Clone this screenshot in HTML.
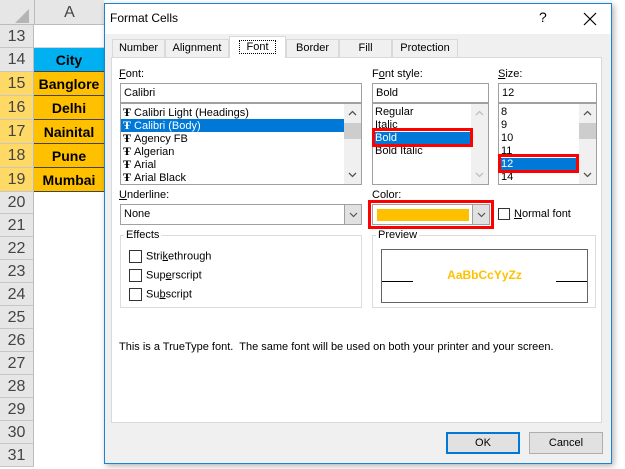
<!DOCTYPE html><html><head><style>
*{box-sizing:border-box;margin:0;padding:0}
body{width:625px;height:469px;overflow:hidden;background:#fff;font-family:"Liberation Sans",sans-serif;font-size:11px;color:#000;position:relative}
.a{position:absolute}
.rh{position:absolute;left:0;width:34px;background:#e6e6e6;border-bottom:1px solid #c6c6c6;border-right:1px solid #bcbcbc;color:#444;font-size:16px;text-align:center}
.cell{position:absolute;left:34px;width:70px;text-align:center;font-weight:bold;font-size:14px;border-bottom:1px solid #444}
.box{position:absolute;background:#fff;border:1px solid #a0a0a0}
.lst{overflow:hidden}
.lst div.i{height:13px;line-height:13px;padding-left:2px;white-space:nowrap}
.tt{font-family:"Liberation Serif",serif;font-weight:bold;font-size:12px;margin-right:3px}
.sb{position:absolute;right:0;top:0;bottom:0;width:17px;background:#f0f0f0}
.sb svg{position:absolute;left:4px}
.chk{display:inline-block;width:13px;height:13px;border:1px solid #333;vertical-align:middle;margin-right:4px;background:#fff}
.tab{position:absolute;top:39px;height:18px;border:1px solid #d9d9d9;border-bottom:none;background:#f0f0f0;text-align:center;line-height:17px}
.dd{position:absolute;right:0;top:0;width:17px;height:19px;background:#e1e1e1;border-left:1px solid #a0a0a0}
.dd svg{position:absolute;left:4px;top:7px}
.red{position:absolute;border:3px solid #f00}
</style></head><body>
<div class="a" style="left:0;top:0;width:104px;height:25px;background:#e6e6e6;border-bottom:1px solid #bcbcbc"></div>
<div class="a" style="left:34px;top:0;width:70px;height:25px;text-align:center;font-size:16px;line-height:25px;color:#444;border-left:1px solid #bcbcbc">A</div>
<svg class="a" style="left:14px;top:8px" width="16" height="16"><path d="M15 1V15H1Z" fill="#b5b5b5"/></svg>
<div class="rh" style="top:25px;height:23px;line-height:23px">13</div>
<div class="rh" style="top:48px;height:24px;line-height:24px">14</div>
<div class="rh" style="top:72px;height:24px;line-height:24px;background:#ffd966">15</div>
<div class="rh" style="top:96px;height:24px;line-height:24px;background:#ffd966">16</div>
<div class="rh" style="top:120px;height:24px;line-height:24px;background:#ffd966">17</div>
<div class="rh" style="top:144px;height:24px;line-height:24px;background:#ffd966">18</div>
<div class="rh" style="top:168px;height:24px;line-height:24px;background:#ffd966">19</div>
<div class="rh" style="top:192px;height:22px;line-height:22px">20</div>
<div class="rh" style="top:214px;height:23px;line-height:23px">21</div>
<div class="rh" style="top:237px;height:23px;line-height:23px">22</div>
<div class="rh" style="top:260px;height:23px;line-height:23px">23</div>
<div class="rh" style="top:283px;height:23px;line-height:23px">24</div>
<div class="rh" style="top:306px;height:23px;line-height:23px">25</div>
<div class="rh" style="top:329px;height:23px;line-height:23px">26</div>
<div class="rh" style="top:352px;height:23px;line-height:23px">27</div>
<div class="rh" style="top:375px;height:23px;line-height:23px">28</div>
<div class="rh" style="top:398px;height:23px;line-height:23px">29</div>
<div class="rh" style="top:421px;height:23px;line-height:23px">30</div>
<div class="rh" style="top:444px;height:23px;line-height:23px">31</div>
<div class="cell" style="top:48px;height:24px;line-height:24px;background:#00b0f0">City</div>
<div class="cell" style="top:72px;height:24px;line-height:24px;background:#ffc000">Banglore</div>
<div class="cell" style="top:96px;height:24px;line-height:24px;background:#ffc000">Delhi</div>
<div class="cell" style="top:120px;height:24px;line-height:24px;background:#ffc000">Nainital</div>
<div class="cell" style="top:144px;height:24px;line-height:24px;background:#ffc000">Pune</div>
<div class="cell" style="top:168px;height:24px;line-height:24px;background:#ffc000">Mumbai</div>
<div class="a" style="left:34px;top:25px;width:70px;height:23px;border-bottom:1px solid #d4d4d4"></div>

<div class="a" style="left:104px;top:3px;width:508px;height:461px;background:#f0f0f0;border:1px solid #1883d7;box-shadow:2px 2px 6px rgba(0,0,0,.3)">
<div class="a" style="left:0;top:0;width:506px;height:30px;background:#fff"></div>
<div class="a" style="left:5px;top:7px;font-size:12px">Format Cells</div>
<div class="a" style="left:434px;top:5px;font-size:14px">?</div>
<svg class="a" style="left:478px;top:8px" width="14" height="14"><path d="M1 1L13 13M13 1L1 13" stroke="#000" stroke-width="1.2"/></svg>
</div>
<div class="tab" style="left:112px;width:53px">Number</div>
<div class="tab" style="left:165px;width:64px">Alignment</div>
<div class="tab" style="left:286px;width:53px">Border</div>
<div class="tab" style="left:339px;width:53px">Fill</div>
<div class="tab" style="left:392px;width:66px">Protection</div>
<div class="a" style="left:111px;top:57px;width:491px;height:366px;background:#fff;border:1px solid #d9d9d9"></div>
<div class="a" style="left:229px;top:36px;width:57px;height:22px;background:#fff;border:1px solid #d9d9d9;border-bottom:none;text-align:center;line-height:20px"><span style="border:1px dotted #000;padding:0 6px">Font</span></div>

<div class="a" style="left:119px;top:68px"><u>F</u>ont:</div>
<div class="a" style="left:372px;top:68px">F<u>o</u>nt style:</div>
<div class="a" style="left:498px;top:68px"><u>S</u>ize:</div>
<div class="box" style="left:120px;top:83px;width:242px;height:20px;padding:3px">Calibri</div>
<div class="box" style="left:372px;top:83px;width:117px;height:20px;padding:3px">Bold</div>
<div class="box" style="left:498px;top:83px;width:99px;height:20px;padding:3px">12</div>
<div class="box lst" style="left:120px;top:103px;width:242px;height:82px;padding-top:2px">
<div class="i"><span class="tt">Ŧ</span>Calibri Light (Headings)</div>
<div class="i" style="background:#0078d7;color:#fff;margin-right:17px"><span class="tt">Ŧ</span>Calibri (Body)</div>
<div class="i"><span class="tt">Ŧ</span>Agency FB</div>
<div class="i"><span class="tt">Ŧ</span>Algerian</div>
<div class="i"><span class="tt">Ŧ</span>Arial</div>
<div class="i"><span class="tt">Ŧ</span>Arial Black</div>
<div class="sb"><svg style="top:6px" width="9" height="6"><path d="M1 5L4.5 1.5L8 5" fill="none" stroke="#555" stroke-width="1.3"/></svg><div style="position:absolute;top:19px;left:0;width:17px;height:16px;background:#cdcdcd"></div><svg style="bottom:6px" width="9" height="6"><path d="M1 1L4.5 4.5L8 1" fill="none" stroke="#555" stroke-width="1.3"/></svg></div>
</div>
<div class="box lst" style="left:372px;top:103px;width:117px;height:82px;padding-top:2px">
<div class="i">Regular</div><div class="i">Italic</div>
<div class="i" style="background:#0078d7;color:#fff;margin-right:17px">Bold</div>
<div class="i">Bold Italic</div>
<div class="sb"><svg style="top:6px" width="9" height="6"><path d="M1 5L4.5 1.5L8 5" fill="none" stroke="#c0c0c0" stroke-width="1.3"/></svg><svg style="bottom:6px" width="9" height="6"><path d="M1 1L4.5 4.5L8 1" fill="none" stroke="#c0c0c0" stroke-width="1.3"/></svg></div>
</div>
<div class="box lst" style="left:498px;top:103px;width:99px;height:82px;padding-top:2px">
<div class="i">8</div><div class="i">9</div><div class="i">10</div><div class="i">11</div>
<div class="i" style="background:#0078d7;color:#fff;margin-right:17px">12</div>
<div class="i">14</div>
<div class="sb"><svg style="top:6px" width="9" height="6"><path d="M1 5L4.5 1.5L8 5" fill="none" stroke="#555" stroke-width="1.3"/></svg><div style="position:absolute;top:19px;left:0;width:17px;height:16px;background:#cdcdcd"></div><svg style="bottom:6px" width="9" height="6"><path d="M1 1L4.5 4.5L8 1" fill="none" stroke="#555" stroke-width="1.3"/></svg></div>
</div>
<div class="red" style="left:372px;top:128px;width:101px;height:19px"></div>
<div class="red" style="left:498px;top:154px;width:81px;height:19px"></div>

<div class="a" style="left:119px;top:189px"><u>U</u>nderline:</div>
<div class="a" style="left:372px;top:189px">Color:</div>
<div class="box" style="left:120px;top:204px;width:242px;height:21px;padding:3px">None
<div class="dd"><svg width="9" height="6"><path d="M1 1L4.5 4.5L8 1" fill="none" stroke="#555" stroke-width="1.2"/></svg></div></div>
<div class="red" style="left:368px;top:200px;width:126px;height:29px"></div>
<div class="box" style="left:372px;top:204px;width:118px;height:21px">
<div style="position:absolute;left:4px;top:4px;width:92px;height:12px;background:#ffc000"></div>
<div class="dd"><svg width="9" height="6"><path d="M1 1L4.5 4.5L8 1" fill="none" stroke="#555" stroke-width="1.2"/></svg></div></div>
<div class="a" style="left:498px;top:208px"><span class="chk" style="width:12px;height:12px"></span><u>N</u>ormal font</div>

<div class="a" style="left:120px;top:235px;width:242px;height:73px;border:1px solid #dcdcdc"></div>
<div class="a" style="left:124px;top:229px;background:#fff;padding:0 2px">Effects</div>
<div class="a" style="left:129px;top:250px"><span class="chk"></span>Stri<u>k</u>ethrough</div>
<div class="a" style="left:129px;top:269px"><span class="chk"></span>Sup<u>e</u>rscript</div>
<div class="a" style="left:129px;top:288px"><span class="chk"></span>Su<u>b</u>script</div>

<div class="a" style="left:372px;top:235px;width:224px;height:73px;border:1px solid #dcdcdc"></div>
<div class="a" style="left:376px;top:229px;background:#fff;padding:0 2px">Preview</div>
<div class="a" style="left:381px;top:249px;width:207px;height:54px;border:1px solid #646464"></div>
<div class="a" style="left:382px;top:281px;width:31px;border-top:1px solid #000"></div>
<div class="a" style="left:556px;top:281px;width:31px;border-top:1px solid #000"></div>
<div class="a" style="left:381px;top:268px;width:207px;text-align:center;color:#ffc000;font-weight:bold;font-size:12px">AaBbCcYyZz</div>

<div class="a" style="left:119px;top:341px">This is a TrueType font.&nbsp; The same font will be used on both your printer and your screen.</div>

<div class="a" style="left:446px;top:432px;width:74px;height:22px;background:#e1e1e1;border:2px solid #0078d7;text-align:center;line-height:18px">OK</div>
<div class="a" style="left:529px;top:432px;width:74px;height:22px;background:#e1e1e1;border:1px solid #adadad;text-align:center;line-height:20px">Cancel</div>
</body></html>
